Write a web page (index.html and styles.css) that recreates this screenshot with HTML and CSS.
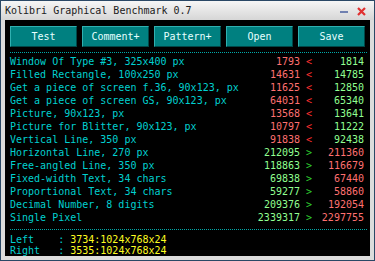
FILE: index.html
```html
<!DOCTYPE html>
<html lang="en">

<head>
    <meta charset="UTF-8" />
    <meta name="viewport" content="width=device-width, initial-scale=1.0" />
    <title>Kolibri Graphical Benchmark</title>
    <link rel="stylesheet" href="styles.css">
</head>

<body>
    <div class="window">
        <div class="titlebar">
            <span class="title">Kolibri Graphical Benchmark 0.7</span>
            <div class="title-buttons">
                <span class="btn-min"></span>
                <svg class="btn-close" width="9" height="9" viewBox="0 0 9 9">
                    <path d="M1 1 L8 8 M8 1 L1 8" stroke="#e03030" stroke-width="2.2" />
                </svg>
            </div>
        </div>
        <div class="frame">
            <div class="panel">
                <div class="toolbar">
                    <button class="tool-btn">Test</button>
                    <button class="tool-btn">Comment+</button>
                    <button class="tool-btn">Pattern+</button>
                    <button class="tool-btn">Open</button>
                    <button class="tool-btn">Save</button>
                </div>
                <div class="dots"></div>
                <ul class="results">
                    <li class="row"><span class="label">Window Of Type #3, 325x400 px</span><span class="num red">1793</span><span class="sym lt">&lt;</span><span class="num green">1814</span></li>
                    <li class="row"><span class="label">Filled Rectangle, 100x250 px</span><span class="num red">14631</span><span class="sym lt">&lt;</span><span class="num green">14785</span></li>
                    <li class="row"><span class="label">Get a piece of screen f.36, 90x123, px</span><span class="num red">11625</span><span class="sym lt">&lt;</span><span class="num green">12850</span></li>
                    <li class="row"><span class="label">Get a piece of screen GS, 90x123, px</span><span class="num red">64031</span><span class="sym lt">&lt;</span><span class="num green">65340</span></li>
                    <li class="row"><span class="label">Picture, 90x123, px</span><span class="num red">13568</span><span class="sym lt">&lt;</span><span class="num green">13641</span></li>
                    <li class="row"><span class="label">Picture for Blitter, 90x123, px</span><span class="num red">10797</span><span class="sym lt">&lt;</span><span class="num green">11222</span></li>
                    <li class="row"><span class="label">Vertical Line, 350 px</span><span class="num red">91838</span><span class="sym lt">&lt;</span><span class="num green">92438</span></li>
                    <li class="row"><span class="label">Horizontal Line, 270 px</span><span class="num green">212095</span><span class="sym gt">&gt;</span><span class="num red">211360</span></li>
                    <li class="row"><span class="label">Free-angled Line, 350 px</span><span class="num green">118863</span><span class="sym gt">&gt;</span><span class="num red">116679</span></li>
                    <li class="row"><span class="label">Fixed-width Text, 34 chars</span><span class="num green">69838</span><span class="sym gt">&gt;</span><span class="num red">67440</span></li>
                    <li class="row"><span class="label">Proportional Text, 34 chars</span><span class="num green">59277</span><span class="sym gt">&gt;</span><span class="num red">58860</span></li>
                    <li class="row"><span class="label">Decimal Number, 8 digits</span><span class="num green">209376</span><span class="sym gt">&gt;</span><span class="num red">192054</span></li>
                    <li class="row"><span class="label">Single Pixel</span><span class="num green">2339317</span><span class="sym gt">&gt;</span><span class="num red">2297755</span></li>
                </ul>
                <div class="dots"></div>
                <div class="status">
                    <div class="status-line">Left    : <span class="value">3734:1024x768x24</span></div>
                    <div class="status-line">Right   : <span class="value">3535:1024x768x24</span></div>
                </div>
            </div>
        </div>
    </div>
</body>

</html>
```

FILE: styles.css
```css
* {
    margin: 0;
    padding: 0;
    box-sizing: border-box;
}

body {
    font-family: "DejaVu Sans Mono", "Liberation Mono", monospace;
    font-size: 10px;
    background: #ffffff;
}

.window {
    width: 375px;
    height: 261px;
    border: 1px solid #2a4866;
    background: #dcdcdc;
    display: flex;
    flex-direction: column;
}

.titlebar {
    height: 19px;
    display: flex;
    align-items: center;
    justify-content: space-between;
    padding: 1px 8px 0 4px;
    background: linear-gradient(#f6f6f6, #d6d6d6);
    color: #202020;
}

.title {
    line-height: 18px;
}

.title-buttons {
    display: flex;
    align-items: center;
    gap: 9px;
}

.btn-min {
    width: 8px;
    height: 2px;
    background: #7080b0;
    margin-top: 1px;
}

.frame {
    flex: 1;
    padding: 0 4px 4px 4px;
    background: #dcdcdc;
}

.panel {
    height: 100%;
    background: #000000;
    padding: 6px 0 0 5px;
    color: #00d0d0;
}

.toolbar {
    display: flex;
    gap: 5px;
}

.tool-btn {
    width: 67px;
    height: 21px;
    font-family: inherit;
    font-size: 10px;
    color: #e6ffff;
    background: #008080;
    border: 1px solid;
    border-color: #30b0b0 #004848 #004848 #30b0b0;
}

.dots {
    width: 357px;
    height: 1px;
    border-top: 1px dotted #00a8a8;
    margin-top: 5px;
}

.results {
    list-style: none;
    padding-top: 2px;
    margin-bottom: 2px;
}

.row {
    display: grid;
    grid-template-columns: 230px 60px 12px 52px;
    line-height: 13px;
    height: 13px;
}

.label {
    white-space: pre;
    overflow: visible;
}

.num {
    text-align: right;
}

.sym {
    padding-left: 6px;
}

.red {
    color: #ff7070;
}

.green {
    color: #90ff90;
}

.lt {
    color: #ff3030;
}

.gt {
    color: #30d030;
}

.status {
    padding-top: 4px;
}

.status-line {
    white-space: pre;
    line-height: 11px;
}

.value {
    color: #ffff20;
}
```
